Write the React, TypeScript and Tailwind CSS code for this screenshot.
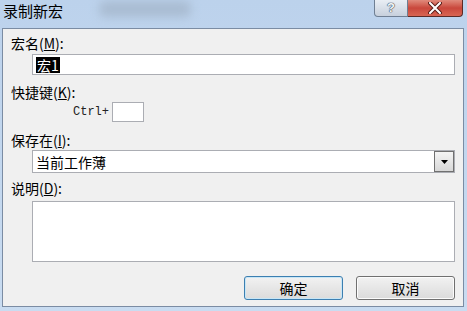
export default function App() {
  const cjk = {
    fontFamily: '"Noto Sans CJK SC", "Noto Sans", sans-serif',
  };

  return (
    <div
      className="w-[467px] h-[311px] flex flex-col bg-gradient-to-b from-[#bcd2ec] to-[#c9dcf1] overflow-hidden"
      style={cjk}
    >
      {/* title bar */}
      <div className="h-[28px] flex items-start">
        <span className="pl-[3px] pt-[2px] text-[15px] leading-[18px] text-black">
          录制新宏
        </span>
        <span className="ml-[36px] mt-[1px] w-[92px] h-[16px] rounded-[6px] bg-[#a9bcd2] blur-[5px]" />
        <div className="ml-auto mr-[4px] flex h-[17px]">
          <div className="w-[34px] h-full flex items-center justify-center rounded-bl-[4px] border border-t-0 border-[#6f7f93] bg-gradient-to-b from-[#e9eef4] to-[#c7d0dc]">
            <span
              className="text-[13px] leading-[16px] font-bold text-[#f4f6f8] [text-shadow:0_0_1px_#3c4a5c,0_0_1px_#3c4a5c,0_0_1px_#3c4a5c]"
              style={{ fontFamily: '"Liberation Sans", sans-serif' }}
            >
              ?
            </span>
          </div>
          <div className="w-[55px] h-full flex items-center justify-center rounded-br-[4px] border border-t-0 border-l-0 border-[#5b2a26] bg-gradient-to-b from-[#e08a7c] via-[#c9473c] to-[#d86552]">
            <svg width="14" height="12" viewBox="0 0 14 12">
              <path
                d="M2 1 L12 11 M12 1 L2 11"
                stroke="#5a1f1a"
                strokeWidth="4"
                strokeLinecap="round"
              />
              <path
                d="M2 1 L12 11 M12 1 L2 11"
                stroke="#ffffff"
                strokeWidth="2"
                strokeLinecap="round"
              />
            </svg>
          </div>
        </div>
      </div>

      {/* client area */}
      <div className="flex-1 ml-[2px] mr-[3px] mb-[4px] border border-[#7b8ca3] bg-[#f0f0f0] px-[8px] pt-[6px] flex flex-col text-black">
        <div className="text-[14px] leading-[16px]">
          宏名(<span className="underline">M</span>):
        </div>
        <div className="mt-[3px] ml-[21px] h-[21px] border border-[#abadb3] bg-white flex items-center pl-[3px]">
          <span className="bg-black text-white text-[14px] leading-[16px] px-px">
            宏1
          </span>
        </div>

        <div className="mt-[9px] text-[14px] leading-[16px]">
          快捷键(<span className="underline">K</span>):
        </div>
        <div className="mt-[2px] ml-[62px] flex items-center">
          <span
            className="text-[12px] leading-[14px] text-[#222]"
            style={{ fontFamily: '"Liberation Mono", monospace' }}
          >
            Ctrl+
          </span>
          <div className="ml-[3px] w-[32px] h-[20px] border border-[#abadb3] bg-white" />
        </div>

        <div className="mt-[10px] text-[14px] leading-[16px]">
          保存在(<span className="underline">I</span>):
        </div>
        <div className="mt-[2px] ml-[21px] h-[23px] border border-[#abadb3] bg-white flex items-center">
          <span className="pl-[3px] text-[14px] leading-[16px] flex-1">
            当前工作薄
          </span>
          <div className="w-[20px] h-[21px] border border-[#707070] bg-gradient-to-b from-[#f4f4f4] to-[#d8d8d8] flex items-center justify-center">
            <svg width="7" height="4" viewBox="0 0 7 4">
              <path d="M0 0 H7 L3.5 4 Z" fill="#000" />
            </svg>
          </div>
        </div>

        <div className="mt-[7px] text-[14px] leading-[16px]">
          说明(<span className="underline">D</span>):
        </div>
        <div className="mt-[5px] ml-[21px] h-[61px] border border-[#abadb3] bg-white" />

        <div className="mt-[14px] flex justify-end gap-[13px]">
          <button className="w-[99px] h-[24px] rounded-[3px] border border-[#3c7fb1] bg-gradient-to-b from-[#f2f2f2] to-[#dbdbdb] shadow-[inset_0_0_0_1px_#c8e6f6] text-[14px] leading-[16px]">
            确定
          </button>
          <button className="w-[99px] h-[24px] rounded-[3px] border border-[#707070] bg-gradient-to-b from-[#f2f2f2] to-[#dbdbdb] shadow-[inset_0_0_0_1px_#fcfcfc] text-[14px] leading-[16px]">
            取消
          </button>
        </div>
      </div>
    </div>
  );
}
